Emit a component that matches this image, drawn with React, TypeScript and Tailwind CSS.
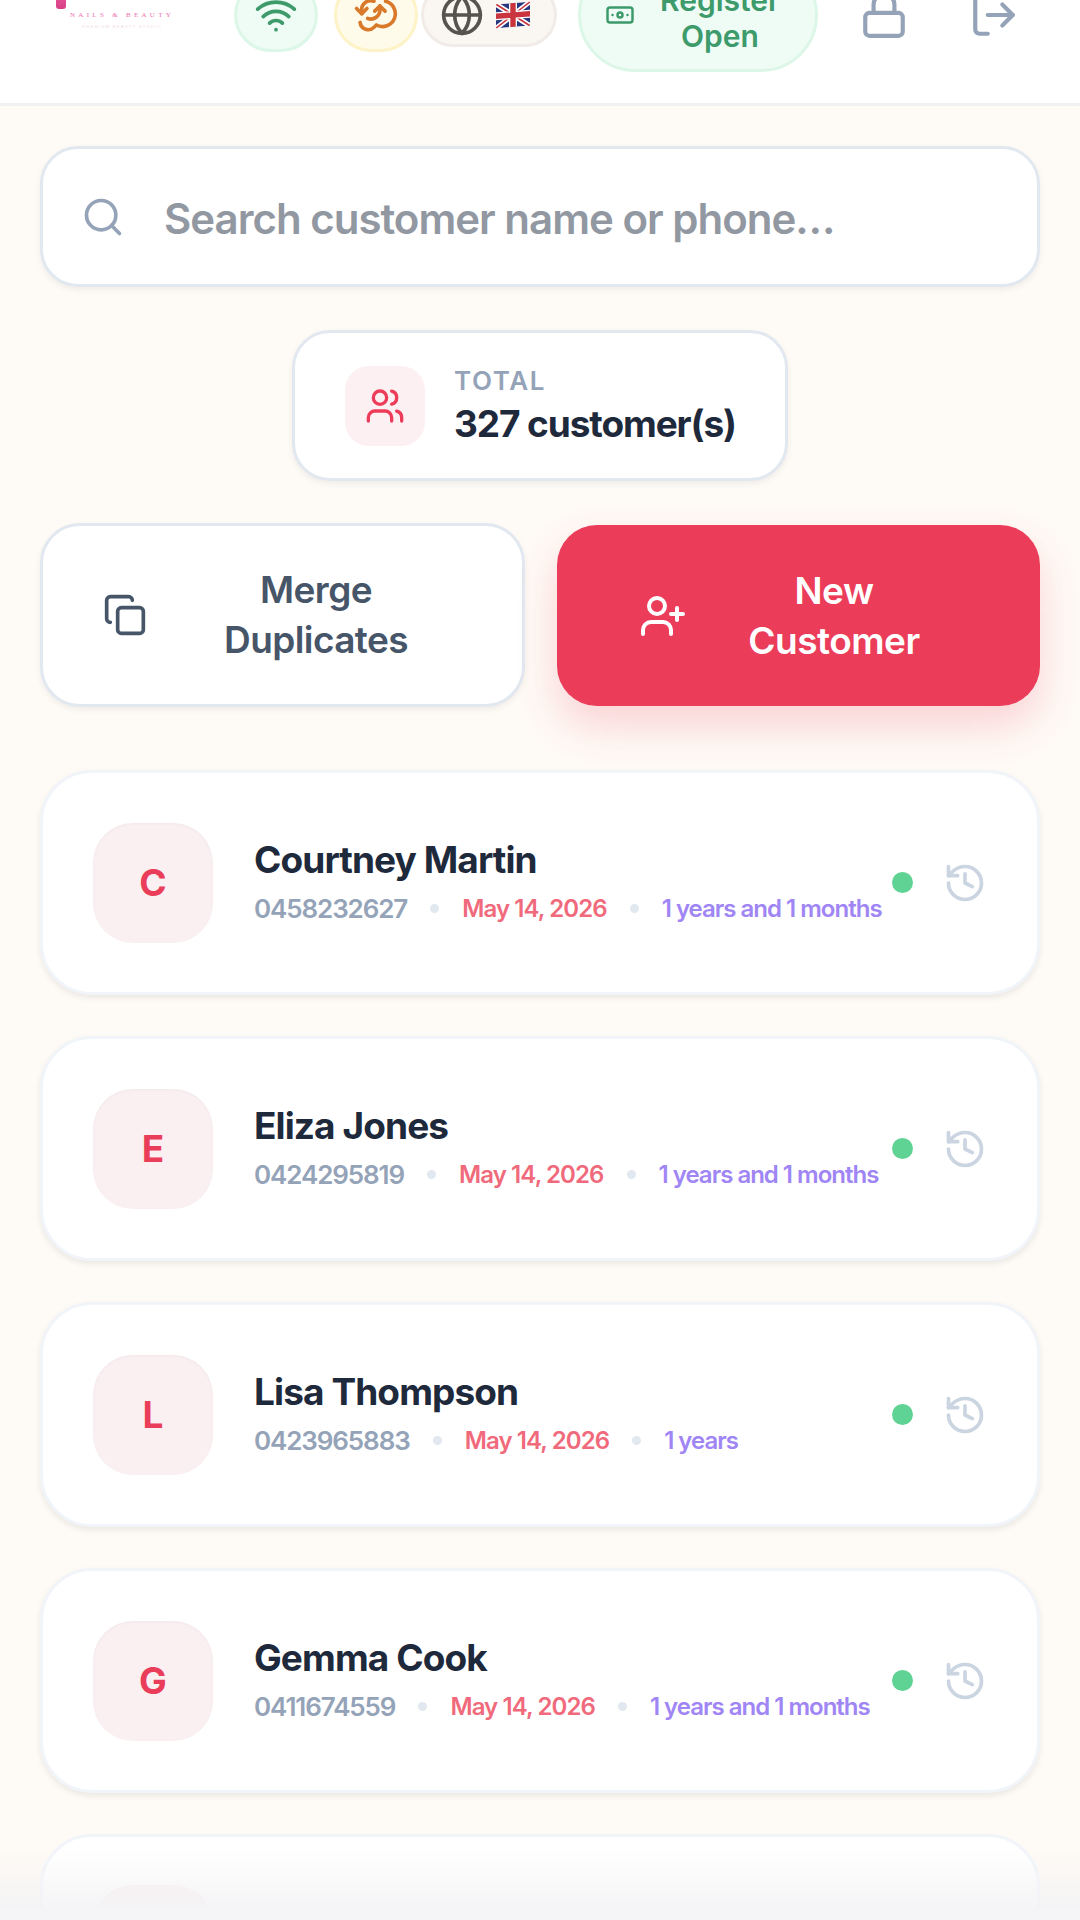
import React from 'react';
import { Wifi, CloudSync, Globe, Banknote, Lock, LogOut, Search, Users, Copy, UserPlus, History } from 'lucide-react';

const customers = [
  { name: 'Courtney Martin', phone: '0458232627', date: 'May 14, 2026', since: '1 years and 1 months' },
  { name: 'Eliza Jones', phone: '0424295819', date: 'May 14, 2026', since: '1 years and 1 months' },
  { name: 'Lisa Thompson', phone: '0423965883', date: 'May 14, 2026', since: '1 years' },
  { name: 'Gemma Cook', phone: '0411674559', date: 'May 14, 2026', since: '1 years and 1 months' },
];

function UkFlag() {
  return (
    <svg width="34" height="24" viewBox="0 0 34 24" className="shrink-0 -skew-y-[4deg]">
      <rect width="34" height="24" fill="#26367f" />
      <path d="M0 0L34 24M34 0L0 24" stroke="#fff" strokeWidth="5" />
      <path d="M0 0L34 24M34 0L0 24" stroke="#c9343f" strokeWidth="1.6" />
      <path d="M17 0V24M0 12H34" stroke="#fff" strokeWidth="8" />
      <path d="M17 0V24M0 12H34" stroke="#c9343f" strokeWidth="5.4" />
    </svg>
  );
}

function Header() {
  return (
    <div className="h-[106px] shrink-0 overflow-hidden border-b-[3px] border-[#f1f1f1] bg-white">
      <div className="mt-[-42px] flex h-[114px] items-center">
        {/* Logo */}
        <div className="ml-[56px] flex w-[178px] shrink-0 self-stretch">
          <div className="mt-[32px] h-[19px] w-[10px] shrink-0 rounded-b-[3px] bg-gradient-to-b from-[#ec5c9c] to-[#d83f86]" />
          <div className="ml-[4px] mt-[55px] flex flex-col items-center">
            <span className="whitespace-nowrap font-['Liberation_Serif',serif] text-[7px] leading-[5px] tracking-[3.3px] text-[#ec6fb0]">
              NAILS &amp; BEAUTY
            </span>
            <span className="mt-[7px] whitespace-nowrap font-['Liberation_Sans',sans-serif] text-[4px] leading-[3px] tracking-[1.3px] text-[#f3d9e2]">
              PREMIUM BEAUTY STUDIO
            </span>
          </div>
        </div>

        {/* Status chips */}
        <div className="flex h-[74px] w-[84px] shrink-0 items-center justify-center rounded-full border-[3px] border-[#dcf7e7] bg-[#effbf5]">
          <Wifi size={44} className="text-[#3d9a6b]" />
        </div>
        <div className="ml-[16px] flex h-[74px] w-[84px] shrink-0 items-center justify-center rounded-full border-[3px] border-[#fdf3c7] bg-[#fffbeb]">
          {/* spinner caught part way round */}
          <CloudSync size={44} className="rotate-[135deg] text-[#d97a2b]" />
        </div>
        <div className="ml-[3px] flex h-[64px] w-[136px] shrink-0 items-center gap-[12px] rounded-full border-[3px] border-[#f1ece8] bg-[#faf6f2] pl-[16px]">
          <Globe size={44} className="shrink-0 text-[#57534e]" />
          <UkFlag />
        </div>
        <div className="ml-[21px] flex h-[114px] w-[240px] shrink-0 items-center rounded-full border-[3px] border-[#dcf7e7] bg-[#effbf5] pl-[24px]">
          <Banknote size={30} className="shrink-0 text-[#3d9a6b]" />
          <span className="flex-1 pr-[10px] pt-[5px] text-center text-[30px] font-semibold leading-[36px] text-[#3d9a6b]">
            Register
            <br />
            Open
          </span>
        </div>
        <Lock size={50} className="ml-[41px] shrink-0 text-[#94a3b8]" />
        <LogOut size={50} className="ml-[60px] shrink-0 text-[#94a3b8]" />
      </div>
    </div>
  );
}

function CustomerRow({ name, phone, date, since }: { name: string; phone: string; date: string; since: string }) {
  return (
    <div className="flex h-[225px] shrink-0 items-center rounded-[52px] border-[3px] border-[#f1f5f9] bg-white pl-[50px] pr-[50px] shadow-[0_3px_6px_rgba(15,23,42,0.08)]">
      <div className="flex h-[120px] w-[120px] shrink-0 items-center justify-center rounded-[40px] bg-[#faf0f2] text-[37px] font-bold text-[#ea3d5a] shadow-[inset_0_1px_3px_rgba(15,23,42,0.04)]">
        {name[0]}
      </div>
      <div className="mb-[3px] ml-[41px] min-w-0 flex-1">
        <div className="text-[37px] font-bold leading-[46px] tracking-[-0.9px] text-[#1e293b]">{name}</div>
        <div className="mt-[9px] flex items-center gap-[23px] whitespace-nowrap text-[24px] font-semibold leading-[34px]">
          <span className="text-[26px] tracking-[-1.1px] text-[#94a3b8]">{phone}</span>
          <span className="h-[9px] w-[9px] rounded-full bg-[#e2e8f0]" />
          <span className="tracking-[-0.9px] text-[#f06a7c]">{date}</span>
          <span className="h-[9px] w-[9px] rounded-full bg-[#e2e8f0]" />
          <span className="tracking-[-1px] text-[#a085f5]">{since}</span>
        </div>
      </div>
      <span className="h-[21px] w-[21px] shrink-0 rounded-full bg-[#5fd394]" />
      <History size={44} className="ml-[30px] shrink-0 text-[#cbd5e1]" />
    </div>
  );
}

export default function App() {
  return (
    <div className="relative flex h-[1920px] w-[1080px] flex-col overflow-hidden bg-[#fefaf5] font-['Inter',sans-serif]">
      <Header />

      <div className="flex flex-col px-[40px] pt-[40px]">
        {/* Search */}
        <div className="flex h-[141px] items-center rounded-[38px] border-[3px] border-[#e2e8f0] bg-white pl-[38px] shadow-[0_3px_6px_rgba(15,23,42,0.06)]">
          <Search size={44} className="shrink-0 text-[#94a3b8]" />
          <input
            placeholder="Search customer name or phone…"
            className="ml-[39px] min-w-0 flex-1 bg-transparent pt-[3px] text-[42px] font-semibold tracking-[-1px] outline-none placeholder:text-[#9298a2]"
          />
        </div>

        {/* Total */}
        <div className="mt-[43px] flex h-[151px] w-[496px] items-center self-center rounded-[38px] border-[3px] border-[#e2e8f0] bg-white pl-[50px] shadow-[0_3px_6px_rgba(15,23,42,0.06)]">
          <div className="flex h-[80px] w-[80px] shrink-0 items-center justify-center rounded-[24px] bg-[#fdf0f3]">
            <Users size={40} className="text-[#ec3c5a]" />
          </div>
          <div className="ml-[29px]">
            <div className="text-[26px] font-semibold leading-[32px] tracking-[1.6px] text-[#94a3b8]">TOTAL</div>
            <div className="mt-[4px] text-[37px] font-bold leading-[46px] tracking-[-1.1px] text-[#1e293b]">
              327 customer(s)
            </div>
          </div>
        </div>

        {/* Actions */}
        <div className="mt-[42px] flex gap-[32px]">
          <button className="flex h-[184px] w-[485px] items-center rounded-[40px] border-[3px] border-[#e2e8f0] bg-white pl-[60px] pr-[56px] text-[#475569] shadow-[0_3px_6px_rgba(15,23,42,0.06)]">
            <Copy size={44} className="shrink-0" />
            <span className="ml-[19px] flex-1 text-center text-[37px] font-semibold leading-[50px] tracking-[-0.6px]">
              Merge
              <br />
              Duplicates
            </span>
          </button>
          <button className="my-[2px] flex h-[181px] w-[483px] items-center rounded-[40px] bg-[#eb3c5a] pl-[82px] pr-[82px] text-white shadow-[0_20px_40px_rgba(235,60,90,0.2)]">
            <UserPlus size={48} className="shrink-0" />
            <span className="ml-[23px] flex-1 text-center text-[37px] font-semibold leading-[50px] tracking-[-0.5px]">
              New
              <br />
              Customer
            </span>
          </button>
        </div>

        {/* Customers */}
        <div className="mt-[62px] flex flex-col gap-[41px]">
          {customers.map((c) => (
            <CustomerRow key={c.name} {...c} />
          ))}
          <div className="flex h-[225px] shrink-0 items-start rounded-[52px] border-[3px] border-[#f1f5f9] bg-white pl-[50px] pt-[48px]">
            <div className="h-[120px] w-[120px] shrink-0 rounded-[40px] bg-[#faf0f2]" />
          </div>
        </div>
      </div>

      {/* Fade above the bottom edge */}
      <div className="absolute inset-x-0 bottom-[12px] h-[60px] bg-gradient-to-b from-transparent to-[rgba(243,243,245,0.85)]" />
      <div className="absolute inset-x-0 bottom-0 h-[12px] bg-[#f5f5f7]" />
    </div>
  );
}
